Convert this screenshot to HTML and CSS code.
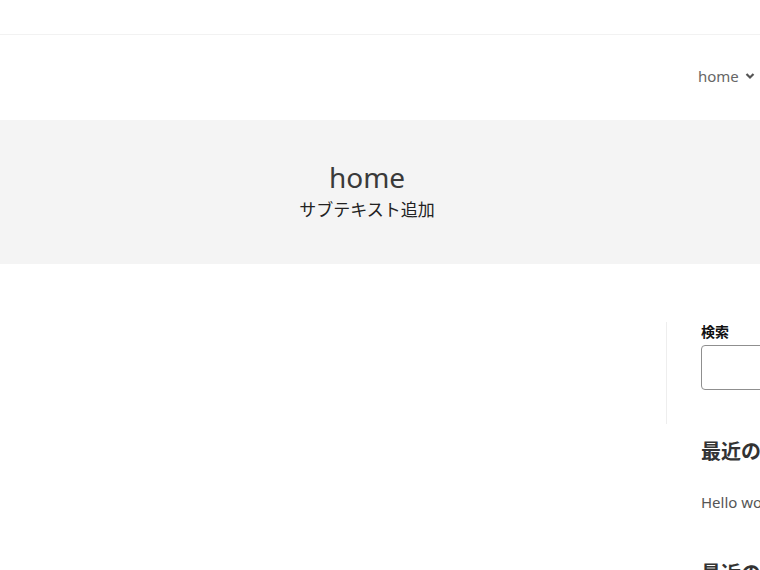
FILE: index.html
```html
<!DOCTYPE html>
<html lang="ja">
<head>
    <meta charset="UTF-8">
    <title>home</title>
    <link rel="stylesheet" href="styles.css">
</head>
<body>

<div id="topBar"></div>

<header id="siteHeader">
    <nav class="globalNav">
        <a href="#" class="navItem">home
            <svg class="navArrow" width="10" height="8" viewBox="0 0 10 8"><path d="M1.5 2 L5 5.5 L8.5 2" fill="none" stroke="#555" stroke-width="2.2"/></svg>
        </a>
    </nav>
</header>

<section id="pageHero">
    <div class="heroInner">
        <h1 class="heroTitle">home</h1>
        <p class="heroSub">サブテキスト追加</p>
    </div>
</section>

<div id="contentRow">
    <main class="mainColumn"></main> <!-- end main -->

    <aside class="sidebar">
        <div class="widget searchWidget">
            <label class="widgetLabel" for="s">検索</label>
            <input type="text" id="s" class="searchInput">
        </div>
        <div class="widget">
            <h2 class="widgetTitle">最近の投稿</h2>
            <p class="widgetLink">Hello world!</p>
        </div>
        <div class="widget">
            <h2 class="widgetTitle">最近のコメント</h2>
        </div>
    </aside> <!-- end sidebar -->
</div> <!-- end contentRow -->

</body>
</html>
```

FILE: styles.css
```css
html, body {
    margin: 0;
    padding: 0;
    overflow: hidden;
}

body {
    background: #fff;
    color: #333;
    font-family: "Noto Sans", "Open Sans", "Noto Sans CJK JP", sans-serif;
    width: 760px;
}

#topBar {
    height: 34px;
    border-bottom: 1px solid #f2f2f2;
}

#siteHeader {
    height: 85px;
    display: flex;
    justify-content: flex-end;
    align-items: center;
}

.globalNav {
    width: 62px;
    margin-top: -4px;
}

.navItem {
    display: flex;
    align-items: center;
    gap: 6px;
    color: #666;
    text-decoration: none;
    font-size: 15px;
    white-space: nowrap;
}

#pageHero {
    background: #f4f4f4;
    height: 144px;
}

.heroInner {
    width: 734px;
    text-align: center;
    padding-top: 38px;
}

.heroTitle {
    margin: 0;
    font-weight: normal;
    font-size: 28px;
    line-height: 38px;
    color: #3a3a3a;
}

.heroSub {
    margin: 0;
    font-size: 17px;
    line-height: 28px;
    color: #222;
}

#contentRow {
    display: flex;
    width: 1100px;
}

.mainColumn {
    width: 666px;
    flex: none;
    margin-top: 58px;
    height: 102px;
    border-right: 1px solid #eee;
}

.sidebar {
    padding-left: 34px;
    padding-top: 59px;
    width: 300px;
}

.widgetLabel {
    display: block;
    font-weight: bold;
    font-size: 14px;
    line-height: 18px;
    color: #111;
}

.searchInput {
    display: block;
    margin-top: 4px;
    width: 260px;
    height: 45px;
    box-sizing: border-box;
    border: 1px solid #8f8f8f;
    border-radius: 4px;
}

.searchWidget {
    margin-bottom: 48px;
}

.widgetTitle {
    margin: 0;
    font-size: 20px;
    line-height: 28px;
    color: #333;
}

.widgetLink {
    margin: 26px 0 48px;
    font-size: 15px;
    color: #555;
}
```
